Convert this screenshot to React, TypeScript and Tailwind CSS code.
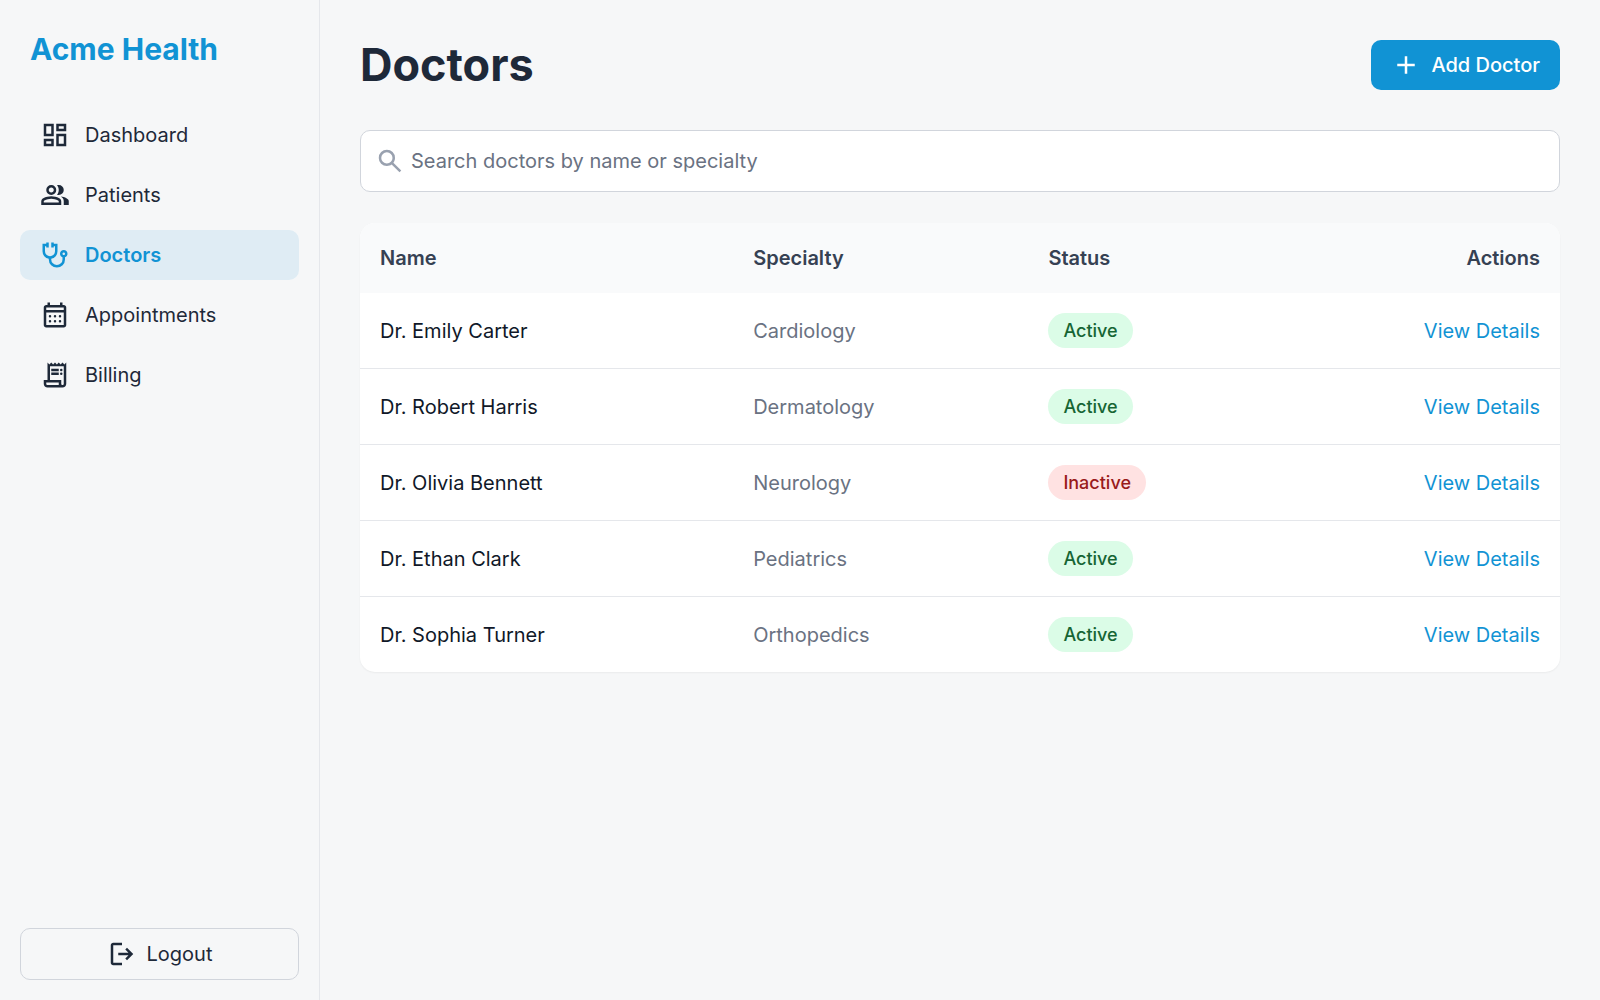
const ICONS = {
  dashboard:
    "M520-600v-240h320v240H520ZM120-440v-400h320v400H120Zm400 320v-400h320v400H520Zm-400 0v-240h320v240H120Zm80-400h160v-240H200v240Zm400 320h160v-240H600v240Zm0-480h160v-80H600v80ZM200-200h160v-80H200v80Z",
  group:
    "M40-160v-112q0-34 17.5-62.5T104-378q62-31 126-46.5T360-440q66 0 130 15.5T616-378q29 15 46.5 43.5T680-272v112H40Zm720 0v-120q0-44-24.5-84.5T666-434q51 6 96 20.5t84 35.5q36 20 55 44.5t19 53.5v120H760ZM360-480q-66 0-113-47t-47-113q0-66 47-113t113-47q66 0 113 47t47 113q0 66-47 113t-113 47Zm400-160q0 66-47 113t-113 47q-11 0-28-2.5t-28-5.5q27-32 41.5-71t14.5-81q0-42-14.5-81T544-792q14-5 28-6.5t28-1.5q66 0 113 47t47 113ZM120-240h480v-32q0-11-5.5-20T580-306q-54-27-109-40.5T360-360q-56 0-111 13.5T140-306q-9 5-14.5 14t-5.5 20v32Zm240-320q33 0 56.5-23.5T440-640q0-33-23.5-56.5T360-720q-33 0-56.5 23.5T280-640q0 33 23.5 56.5T360-560Z",
  stethoscope:
    "M540-80q-108 0-184-76t-76-184v-23q-86-14-143-80.5T80-600v-240h120v-40h80v160h-80v-40h-40v160q0 66 47 113t113 47q66 0 113-47t47-113v-160h-40v40h-80v-160h80v40h120v240q0 90-57 156.5T360-363v23q0 75 52.5 127.5T540-160q75 0 127.5-52.5T720-340v-67q-35-12-57.5-43T640-520q0-50 35-85t85-35q50 0 85 35t35 85q0 39-22.5 70T800-407v67q0 108-76 184T540-80Zm220-400q17 0 28.5-11.5T800-520q0-17-11.5-28.5T760-560q-17 0-28.5 11.5T720-520q0 17 11.5 28.5T760-480Z",
  calendar:
    "M200-80q-33 0-56.5-23.5T120-160v-560q0-33 23.5-56.5T200-800h40v-80h80v80h320v-80h80v80h40q33 0 56.5 23.5T840-720v560q0 33-23.5 56.5T760-80H200Zm0-80h560v-400H200v400Zm0-480h560v-80H200v80ZM280-440a40 40 0 1 1 80 0a40 40 0 1 1-80 0ZM440-440a40 40 0 1 1 80 0a40 40 0 1 1-80 0ZM600-440a40 40 0 1 1 80 0a40 40 0 1 1-80 0ZM280-280a40 40 0 1 1 80 0a40 40 0 1 1-80 0ZM440-280a40 40 0 1 1 80 0a40 40 0 1 1-80 0ZM600-280a40 40 0 1 1 80 0a40 40 0 1 1-80 0Z",
  receipt:
    "M240-80q-50 0-85-35t-35-85v-120h120v-560l60 60 60-60 60 60 60-60 60 60 60-60 60 60 60-60 60 60 60-60v680q0 50-35 85t-85 35H240Zm480-80q17 0 28.5-11.5T760-200v-560H320v440h360v120q0 17 11.5 28.5T720-160ZM360-600v-80h240v80H360Zm0 120v-80h240v80H360ZM640-640a40 40 0 1 1 80 0a40 40 0 1 1-80 0ZM640-520a40 40 0 1 1 80 0a40 40 0 1 1-80 0ZM240-160h360v-80H200v40q0 17 11.5 28.5T240-160Z",
  logout:
    "M200-120q-33 0-56.5-23.5T120-200v-560q0-33 23.5-56.5T200-840h280v80H200v560h280v80H200Zm440-160-55-58 102-102H360v-80h327L585-622l55-58 200 200-200 200Z",
  add: "M440-440H200v-80h240v-240h80v240h240v80H520v240h-80v-240Z",
  search:
    "M784-120 532-372q-30 24-69 38t-83 14q-109 0-184.5-75.5T120-580q0-109 75.5-184.5T380-840q109 0 184.5 75.5T640-580q0 44-14 83t-38 69l252 252-56 56ZM380-400q75 0 127.5-52.5T560-580q0-75-52.5-127.5T380-760q-75 0-127.5 52.5T200-580q0 75 52.5 127.5T380-400Z",
};

type IconName = keyof typeof ICONS;

function Icon({ name }: { name: IconName }) {
  return (
    <svg viewBox="0 -960 960 960" className="size-[30px] shrink-0" fill="currentColor" aria-hidden="true">
      <path d={ICONS[name]} />
    </svg>
  );
}

const NAV: { label: string; icon: IconName; active?: boolean }[] = [
  { label: "Dashboard", icon: "dashboard" },
  { label: "Patients", icon: "group" },
  { label: "Doctors", icon: "stethoscope", active: true },
  { label: "Appointments", icon: "calendar" },
  { label: "Billing", icon: "receipt" },
];

const DOCTORS = [
  { name: "Dr. Emily Carter", specialty: "Cardiology", active: true },
  { name: "Dr. Robert Harris", specialty: "Dermatology", active: true },
  { name: "Dr. Olivia Bennett", specialty: "Neurology", active: false },
  { name: "Dr. Ethan Clark", specialty: "Pediatrics", active: true },
  { name: "Dr. Sophia Turner", specialty: "Orthopedics", active: true },
];

function Sidebar() {
  return (
    <aside className="flex w-80 shrink-0 flex-col border-r border-gray-200 p-5">
      <div className="px-2.5 pt-2.5 text-[30px] leading-[38px] font-bold text-[#1193d4]">Acme Health</div>
      <nav className="mt-[42px] flex flex-col gap-2.5">
        {NAV.map((item) => (
          <a
            key={item.label}
            href="#"
            aria-current={item.active ? "page" : undefined}
            className={
              item.active
                ? "flex items-center gap-[15px] rounded-[10px] bg-[#1193d4]/10 px-5 py-2.5 font-semibold text-[#1193d4]"
                : "flex items-center gap-[15px] rounded-[10px] px-5 py-2.5 text-gray-800"
            }
          >
            <Icon name={item.icon} />
            {item.label}
          </a>
        ))}
      </nav>
      <button
        type="button"
        className="mt-auto flex items-center justify-center gap-2.5 rounded-[10px] border border-gray-300 px-5 py-2.5 text-gray-800"
      >
        <Icon name="logout" />
        Logout
      </button>
    </aside>
  );
}

function StatusBadge({ active }: { active: boolean }) {
  return (
    <span
      className={
        active
          ? "inline-block rounded-full bg-green-100 px-[15px] py-[5px] text-[18px] leading-[25px] font-medium text-[#166534]"
          : "inline-block rounded-full bg-red-100 px-[15px] py-[5px] text-[18px] leading-[25px] font-medium text-[#991b1b]"
      }
    >
      {active ? "Active" : "Inactive"}
    </span>
  );
}

export default function App() {
  return (
    <div className="flex min-h-screen bg-[#f6f7f8] font-['Inter',sans-serif] text-[20px] leading-[30px] text-gray-900">
      <Sidebar />
      <main className="min-w-0 flex-1 p-10">
        <header className="flex items-center justify-between">
          <h1 className="text-[45px] leading-[50px] font-bold text-gray-800">Doctors</h1>
          <button
            type="button"
            className="flex items-center gap-2.5 rounded-[10px] bg-[#1193d4] px-5 py-2.5 font-medium text-white"
          >
            <Icon name="add" />
            Add Doctor
          </button>
        </header>

        <label className="mt-10 flex items-center gap-1.5 rounded-[10px] border border-gray-300 bg-white px-3.5 py-[15px] text-gray-400">
          <Icon name="search" />
          <input
            type="text"
            aria-label="Search doctors"
            placeholder="Search doctors by name or specialty"
            className="min-w-0 flex-1 bg-transparent text-gray-900 outline-none placeholder:text-gray-500"
          />
        </label>

        <div className="mt-[31px] overflow-hidden rounded-[15px] bg-white shadow-xs">
          <table className="w-full">
            <thead className="bg-gray-50 text-gray-700">
              <tr>
                <th scope="col" className="w-[31.1%] p-5 text-left font-semibold">Name</th>
                <th scope="col" className="w-[24.6%] p-5 text-left font-semibold">Specialty</th>
                <th scope="col" className="p-5 text-left font-semibold">Status</th>
                <th scope="col" className="p-5 text-right font-semibold">Actions</th>
              </tr>
            </thead>
            <tbody className="divide-y divide-gray-200">
              {DOCTORS.map((doctor) => (
                <tr key={doctor.name}>
                  <td className="p-5">{doctor.name}</td>
                  <td className="p-5 text-gray-500">{doctor.specialty}</td>
                  <td className="p-5">
                    <StatusBadge active={doctor.active} />
                  </td>
                  <td className="p-5 text-right">
                    <a href="#" className="text-[#1193d4]">
                      View Details
                    </a>
                  </td>
                </tr>
              ))}
            </tbody>
          </table>
        </div>
      </main>
    </div>
  );
}
